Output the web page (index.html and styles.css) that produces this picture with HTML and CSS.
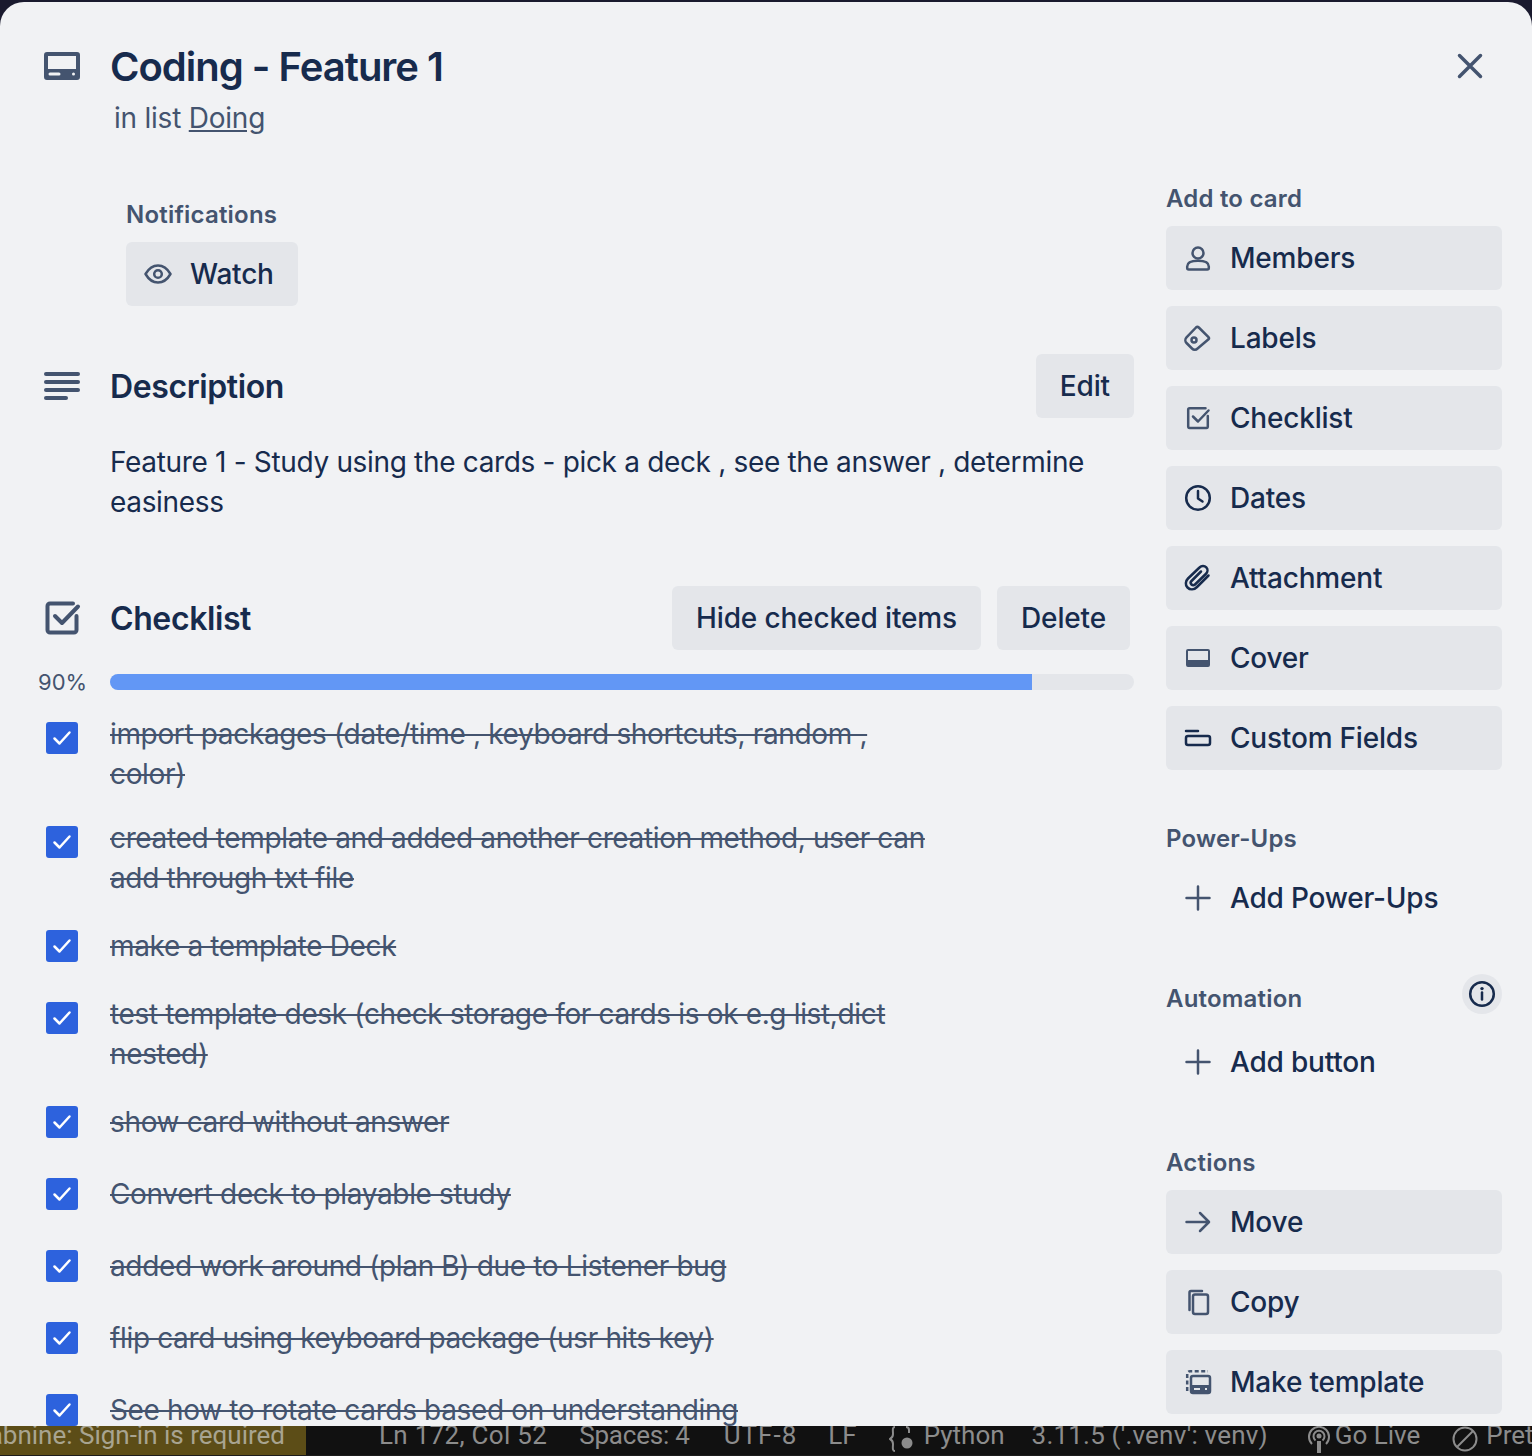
FILE: index.html
```html
<!DOCTYPE html>
<html lang="en">
<head>
    <meta charset="UTF-8">
    <meta name="viewport" content="width=device-width, initial-scale=1.0">
    <title>Coding - Feature 1</title>
    <link rel="stylesheet" href="styles.css">
</head>
<body>

    <div class="modal">
        <header class="card-header">
            <svg class="card-icon" width="36" height="28" viewBox="0 0 36 28"><path fill-rule="evenodd" d="M3 0h30a3 3 0 0 1 3 3v22a3 3 0 0 1-3 3H3a3 3 0 0 1-3-3V3a3 3 0 0 1 3-3zM4 4v13h28V4zM6 20.500a1.500 1.500 0 0 0 0 3h9a1.500 1.500 0 0 0 0-3zM29.500 20.500a1.500 1.500 0 0 0 0 3 1.500 1.500 0 0 0 0-3z"/></svg>
            <div class="card-heading">
                <h1>Coding - Feature 1</h1>
                <p class="card-list">in list <a href="#">Doing</a></p>
            </div>
            <svg class="close-icon" width="32" height="32" viewBox="0 0 32 32"><path d="M5.500 5.500l21 21M26.500 5.500l-21 21"/></svg>
        </header>

        <div class="card-body">
            <main class="main-col">
                <div class="notifications">
                    <h3 class="label">Notifications</h3>
                    <a class="button" href="#">
                        <svg class="btn-icon" width="32" height="32" viewBox="0 0 32 32"><path d="M3.500 16C7 10 11 7.500 16 7.500S25 10 28.500 16C25 22 21 24.500 16 24.500S7 22 3.500 16z"/><circle cx="16" cy="16" r="3.800"/></svg>
                        Watch
                    </a>
                </div>

                <section class="section-head description-head">
                    <svg class="section-icon" width="36" height="28" viewBox="0 0 36 28"><rect y="0" width="36" height="4" rx="2"/><rect y="8" width="36" height="4" rx="2"/><rect y="16" width="36" height="4" rx="2"/><rect y="24" width="24" height="4" rx="2"/></svg>
                    <h2>Description</h2>
                    <div class="head-actions"><a class="button" href="#">Edit</a></div>
                </section>
                <p class="description">Feature 1 - Study using the cards - pick a deck , see the answer , determine easiness</p>

                <section class="section-head checklist-head">
                    <svg class="section-icon check-head-icon" width="36" height="34" viewBox="0 0 36 34"><path class="stroke" d="M28 2.500H5A2.500 2.500 0 0 0 2.500 5v24A2.500 2.500 0 0 0 5 31.500h24a2.500 2.500 0 0 0 2.500-2.500V15"/><path class="stroke" d="M10 15l7 7L33 5.500"/></svg>
                    <h2>Checklist</h2>
                    <div class="head-actions">
                        <a class="button" href="#">Hide checked items</a>
                        <a class="button" href="#">Delete</a>
                    </div>
                </section>

                <div class="progress">
                    <span class="percent">90%</span>
                    <div class="bar"><div class="bar-fill" style="width: 90%"></div></div>
                </div>

                <ul class="items">
                    <li><span class="check"><svg width="20" height="16" viewBox="0 0 20 16"><path d="M2.500 8.500l5 5 10-11"/></svg></span><span class="item-text">import packages (date/time , keyboard shortcuts, random , color)</span></li>
                    <li><span class="check"><svg width="20" height="16" viewBox="0 0 20 16"><path d="M2.500 8.500l5 5 10-11"/></svg></span><span class="item-text">created template and added another creation method, user can add through txt file</span></li>
                    <li><span class="check"><svg width="20" height="16" viewBox="0 0 20 16"><path d="M2.500 8.500l5 5 10-11"/></svg></span><span class="item-text">make a template Deck</span></li>
                    <li><span class="check"><svg width="20" height="16" viewBox="0 0 20 16"><path d="M2.500 8.500l5 5 10-11"/></svg></span><span class="item-text">test template desk (check storage for cards is ok e.g list,dict nested)</span></li>
                    <li><span class="check"><svg width="20" height="16" viewBox="0 0 20 16"><path d="M2.500 8.500l5 5 10-11"/></svg></span><span class="item-text">show card without answer</span></li>
                    <li><span class="check"><svg width="20" height="16" viewBox="0 0 20 16"><path d="M2.500 8.500l5 5 10-11"/></svg></span><span class="item-text">Convert deck to playable study</span></li>
                    <li><span class="check"><svg width="20" height="16" viewBox="0 0 20 16"><path d="M2.500 8.500l5 5 10-11"/></svg></span><span class="item-text">added work around (plan B) due to Listener bug</span></li>
                    <li><span class="check"><svg width="20" height="16" viewBox="0 0 20 16"><path d="M2.500 8.500l5 5 10-11"/></svg></span><span class="item-text">flip card using keyboard package (usr hits key)</span></li>
                    <li><span class="check"><svg width="20" height="16" viewBox="0 0 20 16"><path d="M2.500 8.500l5 5 10-11"/></svg></span><span class="item-text">See how to rotate cards based on understanding</span></li>
                </ul>
            </main>

            <aside class="side-col">
                <h3 class="label first-label">Add to card</h3>
                <div class="side-buttons">
                    <a class="button" href="#">
                        <svg class="btn-icon" width="32" height="32" viewBox="0 0 32 32"><circle cx="16" cy="11" r="5.500"/><path d="M5.200 26v-1.500C5.200 21 9 18.800 16 18.800s10.800 2.200 10.800 5.700V26a1.500 1.500 0 0 1-1.500 1.500H6.700A1.500 1.500 0 0 1 5.200 26z"/></svg>
                        Members
                    </a>
                    <a class="button" href="#">
                        <svg class="btn-icon" width="32" height="32" viewBox="0 0 32 32"><path d="M14 5.500a2 2 0 0 1 2.800 0l9.700 9.700a1.500 1.500 0 0 1 0 2.100L15.600 26.500a4 4 0 0 1-5.600 0l-5.500-5.500a4 4 0 0 1 0-5.600z"/><circle cx="12" cy="18" r="2.500"/></svg>
                        Labels
                    </a>
                    <a class="button" href="#">
                        <svg class="btn-icon" width="32" height="32" viewBox="0 0 32 32"><path d="M23.500 6.300H7.500A1.300 1.300 0 0 0 6.200 7.600v17a1.300 1.300 0 0 0 1.300 1.300h17a1.300 1.300 0 0 0 1.300-1.300V14"/><path d="M11 14.500l5 5L26.500 8.500"/></svg>
                        Checklist
                    </a>
                    <a class="button" href="#">
                        <svg class="btn-icon dark" width="32" height="32" viewBox="0 0 32 32"><circle cx="16" cy="16" r="11.800"/><path d="M16 9v7.500l4.500 3"/></svg>
                        Dates
                    </a>
                    <a class="button" href="#">
                        <svg class="btn-icon dark" width="32" height="32" viewBox="0 0 32 32"><path d="M26.500 13.500L15 25c-3 3-7 3-9.500.5s-2-6.500.5-9L17.500 5.500c2-2 5-2 6.800-.2s1.500 4.700-.5 6.700L13 22.500c-1 1-2.500 1-3.500 0s-1-2.500 0-3.500L19 9.500"/></svg>
                        Attachment
                    </a>
                    <a class="button" href="#">
                        <svg class="btn-icon solid" width="32" height="32" viewBox="0 0 32 32"><path fill-rule="evenodd" d="M6 7h20a2 2 0 0 1 2 2v14a2 2 0 0 1-2 2H6a2 2 0 0 1-2-2V9a2 2 0 0 1 2-2zm0 2v9h20V9z"/></svg>
                        Cover
                    </a>
                    <a class="button" href="#">
                        <svg class="btn-icon dark" width="32" height="32" viewBox="0 0 32 32"><path d="M4 9h12"/><rect x="4" y="14" width="24" height="9" rx="2"/></svg>
                        Custom Fields
                    </a>
                </div>

                <h3 class="label power-label">Power-Ups</h3>
                <a class="button plain" href="#">
                    <svg class="btn-icon" width="32" height="32" viewBox="0 0 32 32"><path d="M16 4.500v23M4.500 16h23"/></svg>
                    Add Power-Ups
                </a>

                <div class="automation-head">
                    <h3 class="label">Automation</h3>
                    <span class="info"><svg class="btn-icon dark" width="28" height="28" viewBox="0 0 28 28"><circle cx="14" cy="14" r="11.800"/><path d="M14 12.500v7"/><circle class="dot" cx="14" cy="8.600" r="1.700"/></svg></span>
                </div>
                <a class="button plain" href="#">
                    <svg class="btn-icon" width="32" height="32" viewBox="0 0 32 32"><path d="M16 4.500v23M4.500 16h23"/></svg>
                    Add button
                </a>

                <h3 class="label actions-label">Actions</h3>
                <div class="side-buttons">
                    <a class="button" href="#">
                        <svg class="btn-icon" width="32" height="32" viewBox="0 0 32 32"><path d="M4.500 16h22M18 7l9 9-9 9"/></svg>
                        Move
                    </a>
                    <a class="button" href="#">
                        <svg class="btn-icon" width="32" height="32" viewBox="0 0 32 32"><path d="M7.500 24V6.500A1.500 1.500 0 0 1 9 5h11"/><rect x="11" y="8.500" width="15" height="19.500" rx="2"/></svg>
                        Copy
                    </a>
                    <a class="button" href="#">
                        <svg class="btn-icon" width="32" height="32" viewBox="0 0 32 32"><path class="dashes" d="M5.200 25V8A2.800 2.800 0 0 1 8 5.200h18"/><rect x="9" y="10" width="19" height="17" rx="2"/><path class="band" fill-rule="evenodd" d="M9 19h19v6a2 2 0 0 1-2 2H11a2 2 0 0 1-2-2zm3 3v2h6v-2zm11 0v2h2v-2z"/></svg>
                        Make template
                    </a>
                </div>
            </aside>
        </div>
    </div>

    <footer class="statusbar">
        <div class="status-warn"><span>Tabnine: Sign-in is required</span></div>
        <div class="status-items">
            <span class="st-ln">Ln 172, Col 52</span>
            <span class="st-spaces">Spaces: 4</span>
            <span class="st-enc">UTF-8</span>
            <span class="st-lf">LF</span>
            <svg class="st-lang-icon" width="28" height="26" viewBox="0 0 28 26"><path d="M6 1C3 1 4 5 4 8s-1 4-3 5c2 1 3 2 3 5s-1 7 2 7"/><path d="M17 1c2 0 3 1 3 3v3"/><circle class="dot" cx="18" cy="17" r="5.500"/></svg>
            <span class="st-python">Python</span>
            <span class="st-version">3.11.5 ('.venv': venv)</span>
            <svg class="st-live-icon" width="24" height="30" viewBox="0 0 24 30"><path d="M5 18a10 10 0 1 1 14 0"/><path d="M8.500 14.500a5.500 5.500 0 1 1 7 0"/><circle class="dot" cx="12" cy="10" r="2.500"/><path class="thick" d="M12 15v12"/></svg>
            <span class="st-live">Go Live</span>
            <svg class="st-pretty-icon" width="26" height="26" viewBox="0 0 26 26"><circle cx="13" cy="13" r="11.500"/><path d="M5 21L21 5"/></svg>
            <span class="st-pretty">Prettier</span>
        </div>
    </footer>

</body>
</html>
```

FILE: styles.css
```css
* {
    box-sizing: border-box;
}
html, body {
    height: 100%;
}
body {
    font-family: Inter, "Liberation Sans", Arial, sans-serif;
    background-color: #1a1a2e;
    margin: 0;
    overflow: hidden;
    color: #172b4d;
}
h1, h2, h3, p, ul {
    margin: 0;
    padding: 0;
}
a {
    color: inherit;
    text-decoration: none;
}

.modal {
    height: 1424px;
    margin-top: 2px;
    background-color: #f1f2f4;
    border-radius: 24px 24px 0 0;
    overflow: hidden;
}

/* header */
.card-header {
    display: flex;
    align-items: flex-start;
    height: 136px;
    padding: 50px 46px 0 44px;
}
.card-icon {
    fill: #44546f;
    margin-right: 30px;
    flex-shrink: 0;
}
.card-heading {
    flex: 1;
    margin-top: -9px;
}
.card-heading h1 {
    font-size: 40px;
    line-height: 48px;
    font-weight: 600;
    letter-spacing: -1px;
}
.card-list {
    font-size: 28px;
    line-height: 40px;
    color: #44546f;
    margin: 7px 0 0 4px;
    letter-spacing: -0.23px;
}
.card-list a {
    text-decoration: underline;
}
.close-icon {
    fill: none;
    stroke: #44546f;
    stroke-width: 3.500;
    stroke-linecap: round;
    margin-top: -2px;
    margin-left: -4px;
}

/* two columns */
.card-body {
    display: grid;
    grid-template-columns: 1134px 336px;
    column-gap: 32px;
    margin-top: 44px;
}

/* buttons */
.button {
    display: inline-flex;
    align-items: center;
    height: 64px;
    padding: 0 24px;
    background-color: #e4e6ea;
    border-radius: 6px;
    font-size: 28px;
    font-weight: 500;
    letter-spacing: -0.2px;
    white-space: nowrap;
}
.btn-icon {
    fill: none;
    stroke: #44546f;
    stroke-width: 2.500;
    stroke-linecap: round;
    stroke-linejoin: round;
    flex-shrink: 0;
    margin-right: 16px;
}
.btn-icon.dark {
    stroke: #172b4d;
}
.btn-icon.solid {
    fill: #44546f;
    stroke: none;
}
.btn-icon .band {
    fill: #44546f;
    stroke: none;
}
.btn-icon .dashes {
    stroke-linecap: butt;
    stroke-dasharray: 4 2.500;
}
.btn-icon .dot {
    fill: #172b4d;
    stroke: none;
}
.label {
    font-size: 24px;
    line-height: 34px;
    font-weight: 600;
    color: #44546f;
    letter-spacing: 0.2px;
}

/* main column */
.main-col {
    padding-top: 16px;
}
.notifications {
    margin-left: 126px;
}
.notifications .label {
    margin-bottom: 10px;
}
.notifications .button {
    padding-left: 16px;
}
.section-head {
    display: flex;
    align-items: center;
    height: 64px;
}
.section-head h2 {
    font-size: 32px;
    font-weight: 600;
    line-height: 40px;
    padding-top: 2px;
    letter-spacing: -0.4px;
}
.section-icon {
    fill: #44546f;
    margin-left: 44px;
    margin-right: 30px;
    flex-shrink: 0;
}
.check-head-icon {
    fill: none;
    margin-left: 45px;
    margin-right: 29px;
}
.check-head-icon .stroke {
    fill: none;
    stroke: #44546f;
    stroke-width: 4;
    stroke-linecap: round;
    stroke-linejoin: round;
}
.head-actions {
    margin-left: auto;
    display: flex;
    gap: 16px;
}
.head-actions .button {
    letter-spacing: -0.15px;
}
.description-head {
    margin-top: 48px;
}
.description {
    margin: 24px 0 0 110px;
    font-size: 28px;
    line-height: 40px;
    letter-spacing: -0.33px;
}
.checklist-head {
    margin-top: 64px;
}
.checklist-head .head-actions {
    margin-right: 4px;
}

.progress {
    display: flex;
    align-items: center;
    height: 40px;
    margin-top: 12px;
}
.percent {
    width: 110px;
    padding-left: 38px;
    font-size: 22px;
    color: #44546f;
}
.bar {
    flex: 1;
    height: 16px;
    border-radius: 8px;
    background-color: #e4e6ea;
    overflow: hidden;
}
.bar-fill {
    height: 100%;
    background-color: #6297f5;
}

.items {
    list-style: none;
    margin-top: 0;
}
.items li {
    display: flex;
    min-height: 72px;
    padding: 12px 0;
}
.check {
    width: 32px;
    height: 32px;
    margin: 8px 32px 0 46px;
    border-radius: 3px;
    background-color: #2d62dd;
    display: flex;
    align-items: center;
    justify-content: center;
    flex-shrink: 0;
}
.check svg {
    fill: none;
    stroke: #ffffff;
    stroke-width: 2.500;
    stroke-linecap: round;
    stroke-linejoin: round;
}
.item-text {
    align-self: center;
    max-width: 830px;
    font-size: 28px;
    line-height: 40px;
    letter-spacing: -0.35px;
    color: #44546f;
    text-decoration: line-through;
}

/* sidebar */
.side-col {
    width: 336px;
}
.first-label {
    margin-bottom: 10px;
}
.side-buttons {
    display: flex;
    flex-direction: column;
    gap: 16px;
}
.side-buttons .button, .plain {
    display: flex;
    padding-left: 16px;
}
.plain {
    background: none;
}
.power-label {
    margin: 52px 0 10px;
}
.automation-head {
    display: flex;
    justify-content: space-between;
    align-items: flex-end;
    height: 40px;
    margin: 44px 0 16px;
}
.automation-head .label {
    margin-bottom: -2px;
}
.info {
    width: 40px;
    height: 40px;
    border-radius: 50%;
    background-color: #e4e6ea;
    display: flex;
    align-items: center;
    justify-content: center;
}
.info .btn-icon {
    margin: 0;
}
.actions-label {
    margin: 52px 0 10px;
}

/* editor status bar along the bottom */
.statusbar {
    display: flex;
    height: 30px;
    background-color: #111111;
    color: #8c8c8c;
    font-family: Roboto, "Liberation Sans", sans-serif;
    font-size: 26px;
    line-height: 18px;
    white-space: nowrap;
    overflow: hidden;
    border-bottom: 1px solid #1c1c1c;
}
.status-warn {
    width: 306px;
    background-color: #5c4d17;
    color: #a8a490;
    display: flex;
    justify-content: flex-end;
    padding: 0 21px 0 0;
    flex-shrink: 0;
    overflow: hidden;
}
.status-warn span {
    flex-shrink: 0;
}
.status-items {
    display: flex;
    align-items: flex-start;
    padding-left: 73px;
}
.status-items svg {
    fill: none;
    stroke: #8c8c8c;
    stroke-width: 2;
    flex-shrink: 0;
}
.status-items .dot {
    fill: #8c8c8c;
    stroke: none;
}
.status-items .thick {
    stroke-width: 4;
}
.st-ln { letter-spacing: 0.3px; }
.st-spaces { margin-left: 32px; letter-spacing: -0.2px; }
.st-enc { margin-left: 34px; letter-spacing: 1px; }
.st-lf { margin-left: 31px; }
.st-lang-icon { margin-left: 32px; margin-right: 7px; }
.st-version { margin-left: 27px; letter-spacing: 0.2px; }
.st-live-icon { margin-left: 39px; margin-right: 4px; }
.st-pretty-icon { margin-left: 32px; margin-right: 8px; }
```
